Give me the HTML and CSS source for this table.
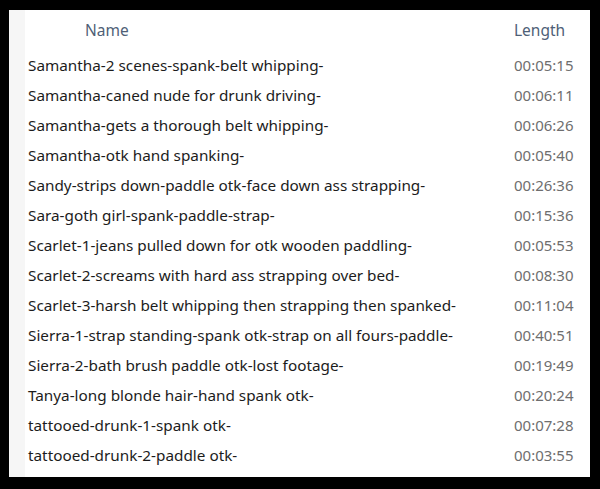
FILE: index.html
```html
<!DOCTYPE html>
<html lang="en">
<head>
    <meta charset="UTF-8">
    <title>Videos</title>
    <link rel="stylesheet" href="styles.css">
</head>
<body>
    <div class="file-list">
        <div class="col-head name-head">Name</div>
        <div class="col-head">Length</div>

        <div class="name">Samantha-2 scenes-spank-belt whipping-</div>
        <div class="length">00:05:15</div>
        <div class="name">Samantha-caned nude for drunk driving-</div>
        <div class="length">00:06:11</div>
        <div class="name">Samantha-gets a thorough belt whipping-</div>
        <div class="length">00:06:26</div>
        <div class="name">Samantha-otk hand spanking-</div>
        <div class="length">00:05:40</div>
        <div class="name">Sandy-strips down-paddle otk-face down ass strapping-</div>
        <div class="length">00:26:36</div>
        <div class="name">Sara-goth girl-spank-paddle-strap-</div>
        <div class="length">00:15:36</div>
        <div class="name">Scarlet-1-jeans pulled down for otk wooden paddling-</div>
        <div class="length">00:05:53</div>
        <div class="name">Scarlet-2-screams with hard ass strapping over bed-</div>
        <div class="length">00:08:30</div>
        <div class="name">Scarlet-3-harsh belt whipping then strapping then spanked-</div>
        <div class="length">00:11:04</div>
        <div class="name">Sierra-1-strap standing-spank otk-strap on all fours-paddle-</div>
        <div class="length">00:40:51</div>
        <div class="name">Sierra-2-bath brush paddle otk-lost footage-</div>
        <div class="length">00:19:49</div>
        <div class="name">Tanya-long blonde hair-hand spank otk-</div>
        <div class="length">00:20:24</div>
        <div class="name">tattooed-drunk-1-spank otk-</div>
        <div class="length">00:07:28</div>
        <div class="name">tattooed-drunk-2-paddle otk-</div>
        <div class="length">00:03:55</div>
    </div>
</body>
</html>
```

FILE: styles.css
```css
body {
    margin: 0;
    padding: 10px 10px 12px 9px;
    background-color: #000;
    font-family: "Noto Sans", "Open Sans", sans-serif;
}

.file-list {
    display: grid;
    grid-template-columns: 1fr 72px;
    grid-template-rows: 40px repeat(14, 30px);
    align-items: center;
    height: 467px;
    box-sizing: border-box;
    padding: 0 4px 0 19px;
    background: linear-gradient(to right, #f6f6f6 0, #f6f6f6 16px, #fff 16px);
}

.col-head {
    font-size: 15.5px;
    color: #4f5f77;
}

.name-head {
    padding-left: 57px;
}

.name {
    font-size: 15.3px;
    color: #1c1c1c;
    white-space: nowrap;
}

.length {
    font-size: 15px;
    color: #6e6e6e;
}
```
